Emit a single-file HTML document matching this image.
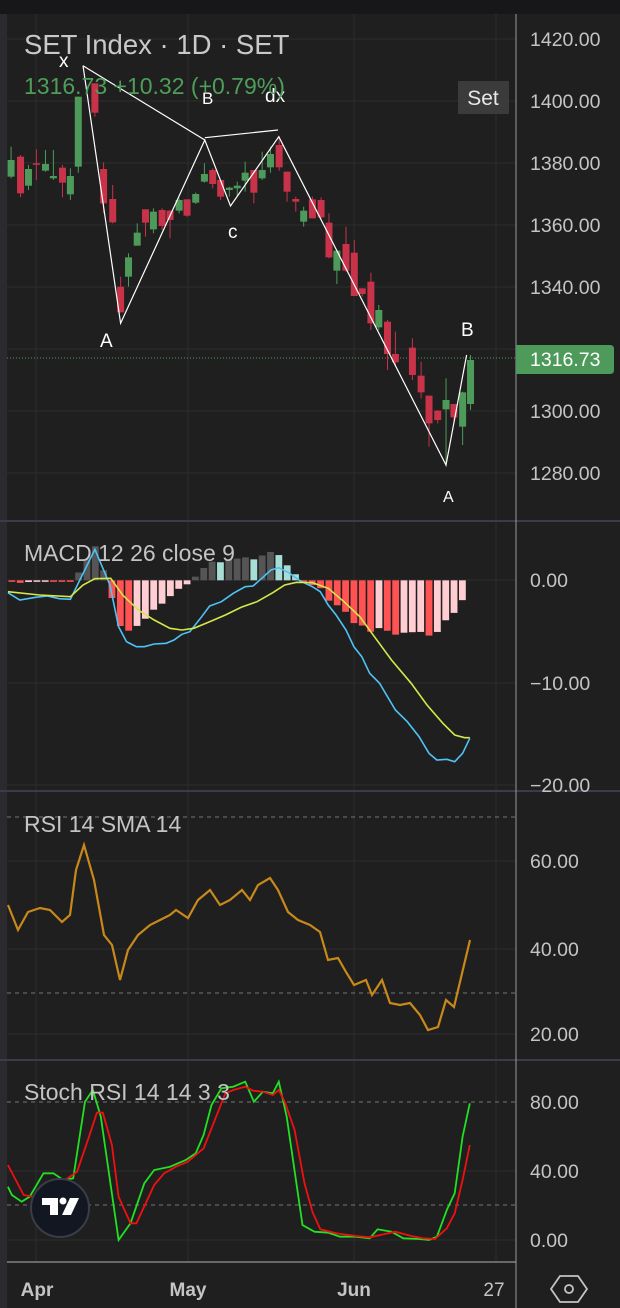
<!DOCTYPE html><html><head><meta charset="utf-8"><style>
html,body{margin:0;padding:0;background:#1f1f1f;width:620px;height:1308px;overflow:hidden}
svg{display:block}
text{font-family:"Liberation Sans",sans-serif}
</style></head><body>
<svg id="s" width="620" height="1308" viewBox="0 0 620 1308" xmlns="http://www.w3.org/2000/svg">
<rect width="620" height="1308" fill="#1f1f1f"/>
<rect width="620" height="14" fill="#17171a"/>
<rect y="14" width="7" height="1294" fill="#2a2a2f"/>
<g stroke="#2c2c2c" stroke-width="1">
<line x1="36" y1="14" x2="36" y2="1262"/><line x1="188" y1="14" x2="188" y2="1262"/><line x1="354" y1="14" x2="354" y2="1262"/><line x1="496" y1="14" x2="496" y2="1262"/>
<line x1="7" y1="39" x2="516" y2="39"/><line x1="7" y1="101" x2="516" y2="101"/><line x1="7" y1="163" x2="516" y2="163"/><line x1="7" y1="225" x2="516" y2="225"/><line x1="7" y1="287" x2="516" y2="287"/><line x1="7" y1="349" x2="516" y2="349"/><line x1="7" y1="411" x2="516" y2="411"/><line x1="7" y1="473" x2="516" y2="473"/>
<line x1="7" y1="580" x2="516" y2="580"/><line x1="7" y1="683" x2="516" y2="683"/><line x1="7" y1="785" x2="516" y2="785"/>
<line x1="7" y1="861" x2="516" y2="861"/><line x1="7" y1="949" x2="516" y2="949"/><line x1="7" y1="1034" x2="516" y2="1034"/>
<line x1="7" y1="1171" x2="516" y2="1171"/><line x1="7" y1="1240" x2="516" y2="1240"/>
</g>
<g stroke="#777" stroke-width="1" stroke-dasharray="4,4">
<line x1="7" y1="817" x2="516" y2="817"/><line x1="7" y1="993" x2="516" y2="993"/>
<line x1="7" y1="1102" x2="516" y2="1102"/><line x1="7" y1="1205" x2="516" y2="1205"/>
</g>
<g stroke="#3a3d47" stroke-width="2">
<line x1="0" y1="521" x2="620" y2="521"/><line x1="0" y1="791" x2="620" y2="791"/><line x1="0" y1="1060" x2="620" y2="1060"/>
</g>
<line x1="516" y1="14" x2="516" y2="1308" stroke="#9a9a9a" stroke-width="1"/>
<line x1="7" y1="1262" x2="516" y2="1262" stroke="#b0b0b0" stroke-width="1"/>
<line x1="7" y1="358" x2="516" y2="358" stroke="#4e9a5a" stroke-width="1" stroke-dasharray="1,2"/>
<g id="candles"></g>
<g id="pattern" fill="none" stroke="#fff" stroke-width="1.2"></g>
<g id="macd"></g>
<g id="ind"></g>
<g fill="#fff" font-size="19">
<text x="59" y="67">x</text><text x="100" y="347">A</text><text x="202" y="104" font-size="17">B</text><text x="228" y="238">c</text><text x="265" y="102">dx</text><text x="461" y="336">B</text><text x="443" y="502" font-size="16">A</text>
</g>
<text x="24" y="54" font-size="27.5" fill="#c9c9c9">SET Index · 1D · SET</text>
<text x="24" y="94" font-size="23" fill="#4e9e5a">1316.73  +10.32 (+0.79%)</text>
<rect x="458" y="81" width="51" height="33" fill="#3b3b3b"/>
<text x="483" y="105" font-size="21" fill="#e8e8e8" text-anchor="middle">Set</text>
<g font-size="19.5" fill="#c4c4c4">
<text x="530" y="46">1420.00</text><text x="530" y="108">1400.00</text><text x="530" y="170">1380.00</text><text x="530" y="232">1360.00</text><text x="530" y="294">1340.00</text><text x="530" y="418">1300.00</text><text x="530" y="480">1280.00</text>
<text x="530" y="587">0.00</text><text x="530" y="690">−10.00</text><text x="530" y="792">−20.00</text>
<text x="530" y="868">60.00</text><text x="530" y="956">40.00</text><text x="530" y="1041">20.00</text>
<text x="530" y="1109">80.00</text><text x="530" y="1178">40.00</text><text x="530" y="1247">0.00</text>
</g>
<path d="M516 345 H610 Q614 345 614 349 V370 Q614 374 610 374 H516 Z" fill="#4e9a5a"/>
<text x="530" y="366" font-size="19.5" fill="#fff">1316.73</text>
<g font-size="23" fill="#c4c4c4">
<text x="24" y="561">MACD 12 26 close 9</text>
<text x="24" y="832">RSI 14 SMA 14</text>
<text x="24" y="1100">Stoch RSI 14 14 3 3</text>
</g>
<g font-size="19" fill="#c4c4c4" text-anchor="middle">
<text x="37" y="1296" font-weight="bold">Apr</text><text x="188" y="1296" font-weight="bold">May</text><text x="354" y="1296" font-weight="bold">Jun</text><text x="494" y="1296">27</text>
</g>
<path d="M560 1276 L578 1276 L587 1289 L578 1302 L560 1302 L551 1289 Z" fill="none" stroke="#c4c4c4" stroke-width="1.8"/>
<circle cx="569" cy="1289" r="4" fill="none" stroke="#c4c4c4" stroke-width="1.8"/>
<circle cx="60" cy="1208" r="29" fill="#131722" stroke="#3a3d47" stroke-width="2"/>
<path d="M42 1198 H58 V1215 H50 V1205 H42 Z" fill="#fff"/><circle cx="63" cy="1201" r="3.5" fill="#fff"/><path d="M70 1198 H79 L71 1215 H62 Z" fill="#fff"/>
</svg>
<script>
var NS="http://www.w3.org/2000/svg",sx=1/2.529,sy=1/3;
function el(p,t,a){var e=document.createElementNS(NS,t);for(var k in a)e.setAttribute(k,a[k]);document.getElementById(p).appendChild(e);return e;}
var C=[[28,480,530,440,535,'g'],[52,470,580,465,592,'r'],[72,507,557,495,570,'g'],[92,490,493,448,540,'r'],[115,492,512,450,515,'g'],[135,528,535,450,540,'g'],[158,503,548,495,592,'r'],[178,528,583,505,600,'g'],[198,290,500,290,518,'g'],[240,250,338,250,350,'r'],[262,507,610,487,640,'r'],[285,597,667,555,670,'r'],[305,860,937,830,937,'r'],[325,772,830,760,860,'g'],[347,698,737,670,737,'g'],[368,628,668,628,710,'r'],[388,635,688,625,700,'g'],[410,630,678,625,690,'r'],[430,632,660,630,715,'r'],[453,600,632,595,640,'g'],[473,598,647,598,650,'r'],[495,582,608,578,612,'g'],[517,522,545,490,548,'g'],[538,510,552,505,565,'r'],[558,540,590,540,600,'r'],[580,563,570,560,590,'g'],[600,557,565,545,590,'g'],[620,518,542,485,575,'g'],[642,510,578,510,610,'r'],[663,510,535,455,540,'g'],[684,462,502,440,518,'g'],[706,435,502,410,512,'r'],[726,515,575,515,605,'r'],[748,597,605,590,635,'r'],[768,632,665,620,680,'g'],[790,598,655,590,650,'r'],[812,600,652,592,655,'r'],[832,668,772,640,775,'r'],[852,752,812,750,852,'g'],[875,732,812,680,815,'r'],[896,758,888,720,888,'r'],[916,865,882,865,890,'r'],[938,845,970,818,990,'r'],[958,930,982,915,990,'g'],[980,965,1062,960,1110,'r'],[1000,1062,1087,995,1100,'r'],[1043,1043,1125,1015,1140,'r'],[1065,1127,1177,1085,1195,'r'],[1085,1187,1270,1187,1340,'r'],[1107,1232,1260,1230,1270,'r'],[1128,1200,1228,1135,1400,'g'],[1148,1212,1252,1212,1265,'r'],[1170,1177,1280,1175,1335,'g'],[1190,1080,1212,1065,1230,'g']];
C.forEach(function(c){var x=c[0]*sx,col=c[5]=='g'?'#4e9a5a':'#c8334a';
el('candles','line',{x1:x,x2:x,y1:c[3]*sy,y2:c[4]*sy,stroke:col,'stroke-width':1});
el('candles','rect',{x:x-3.5,y:c[1]*sy,width:7,height:Math.max(1.5,(c[2]-c[1])*sy),fill:col});});
function pts(a,oy){return a.map(function(p){return (p[0]*sx).toFixed(1)+','+(p[1]*sy+oy).toFixed(1)}).join(' ');}
el('pattern','polyline',{points:pts([[210,197],[305,970],[518,420],[583,618],[705,410],[1128,1395],[1180,1065]],0)});
el('pattern','polyline',{points:pts([[210,197],[518,420]],0)});
el('pattern','polyline',{points:pts([[518,413],[703,390]],0)});
var B=[[20,218],[50,240],[90,232],[120,228],[150,236],[178,238],[240,88],[262,150],[278,195],[300,320],[320,365],[345,380],[365,380],[390,372],[420,370],[440,360],[460,343],[480,335],[510,290],[530,258],[560,245],[590,220],[620,200],[640,198],[665,172],[685,150],[705,143],[730,158],[760,183],[790,200],[810,215],[830,255],[850,285],[875,330],[895,380],[915,410],[935,460],[960,490],[1000,570],[1030,605],[1060,650],[1085,700],[1105,720],[1130,718],[1150,725],[1170,700],[1188,655]];
var Y=[[20,215],[100,225],[178,230],[210,195],[240,176],[280,175],[310,225],[350,270],[390,300],[430,325],[460,330],[490,325],[530,305],[570,285],[610,262],[650,245],[690,218],[720,195],[750,187],[790,188],[830,205],[870,245],[910,290],[950,355],[990,420],[1040,490],[1080,555],[1120,610],[1150,645],[1175,653],[1188,653]];
function interp(a,x){for(var i=1;i<a.length;i++){if(x<=a[i][0]){var t=(x-a[i-1][0])/(a[i][0]-a[i-1][0]);return a[i-1][1]+t*(a[i][1]-a[i-1][1]);}}return a[a.length-1][1];}
var prev=0;
for(var x=30;x<=1190;x+=21.1){var h=(interp(Y,x)-interp(B,x))*1.2;if(x<185)h=-Math.abs(h)*0.3;
var col;if(h>=0){col=(x>690&&x<770)||(x>545&&x<575)||(x>625&&x<655)?'#a8ddd6':'#555';}else{col=(h<prev)?'#ff5252':'#ffcdd2';}
prev=h;var y0=181,y1=181-h;el('macd','rect',{x:x*sx-3.4,y:Math.min(y0,y1)*sy+520,width:6.8,height:Math.max(1.5,Math.abs(h)*sy),fill:col});}
el('macd','polyline',{points:pts(B,520),fill:'none',stroke:'#4fc3f7','stroke-width':1.6});
el('macd','polyline',{points:pts(Y,520),fill:'none',stroke:'#d4e84a','stroke-width':1.6});
var R=[[8,905],[18,930],[28,912],[40,908],[50,910],[62,922],[70,915],[76,870],[84,845],[94,880],[104,935],[112,945],[120,980],[128,950],[138,935],[150,925],[160,920],[170,915],[176,910],[188,918],[198,900],[210,890],[220,905],[230,900],[242,890],[250,900],[258,885],[270,878],[278,890],[288,912],[298,920],[310,925],[320,932],[328,960],[338,958],[346,972],[354,985],[366,980],[372,995],[382,980],[390,1003],[400,1005],[410,1003],[420,1015],[428,1030],[438,1027],[446,1000],[454,1007],[470,940]];
el('ind','polyline',{points:R.map(function(p){return p[0]+','+p[1]}).join(' '),fill:'none',stroke:'#c8891a','stroke-width':2.2});
var G=[[20,440],[30,465],[55,485],[75,470],[110,400],[135,400],[160,420],[185,415],[215,185],[235,150],[255,230],[300,600],[330,550],[365,430],[390,390],[430,380],[470,360],[495,340],[515,285],[535,195],[560,145],[590,140],[620,125],[642,185],[665,155],[690,160],[705,125],[725,230],[765,555],[795,575],[830,578],[860,590],[900,590],[935,595],[955,568],[990,575],[1020,595],[1060,597],[1085,600],[1105,590],[1130,510],[1150,460],[1170,290],[1188,190]];
var RD=[[20,375],[40,420],[60,465],[85,470],[120,450],[165,420],[195,395],[225,290],[245,218],[260,218],[283,315],[300,470],[330,550],[345,550],[390,435],[415,400],[445,380],[475,365],[515,325],[545,235],[570,160],[590,150],[620,140],[640,152],[665,155],[690,165],[705,150],[720,185],[745,270],[770,430],[790,515],[810,568],[850,580],[900,588],[935,592],[970,583],[1000,575],[1040,588],[1070,595],[1100,597],[1130,565],[1150,520],[1170,420],[1188,315]];
el('ind','polyline',{points:pts(G,1040),fill:'none',stroke:'#22e022','stroke-width':1.8});
el('ind','polyline',{points:pts(RD,1040),fill:'none',stroke:'#f01010','stroke-width':1.8});
var s=document.getElementById('s');var logo=[].slice.call(s.querySelectorAll('circle[cx="60"], path[d^="M42"], circle[cx="63"], path[d^="M70"]'));logo.forEach(function(n){s.appendChild(n);});
</script>
</body></html>
